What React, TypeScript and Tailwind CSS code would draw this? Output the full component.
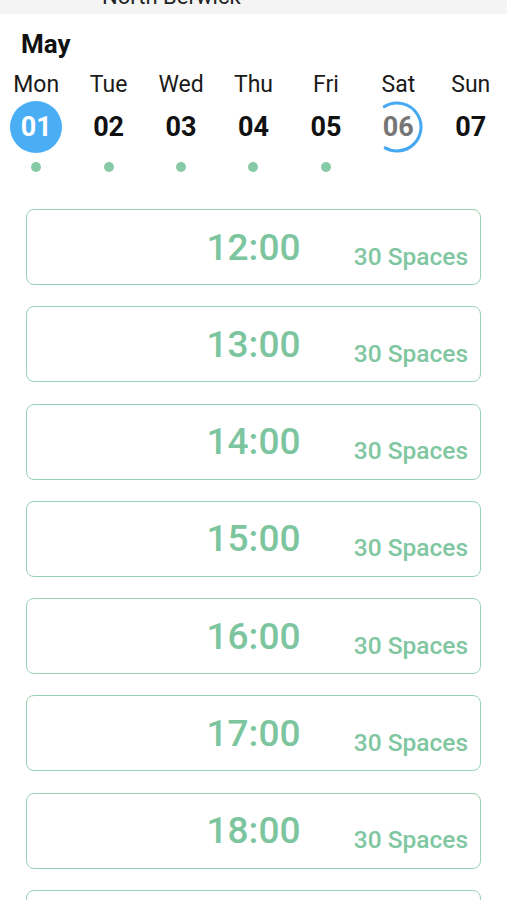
import React from "react";

const days = [
  { name: "Mon", num: "01", state: "selected", dot: true },
  { name: "Tue", num: "02", state: "normal", dot: true },
  { name: "Wed", num: "03", state: "normal", dot: true },
  { name: "Thu", num: "04", state: "normal", dot: true },
  { name: "Fri", num: "05", state: "normal", dot: true },
  { name: "Sat", num: "06", state: "loading", dot: false },
  { name: "Sun", num: "07", state: "normal", dot: false },
];

const times = ["12:00", "13:00", "14:00", "15:00", "16:00", "17:00", "18:00", "19:00"];

export default function App() {
  return (
    <div
      className="w-[507px] h-[900px] overflow-hidden bg-white"
      style={{ fontFamily: "Roboto, 'Noto Sans', sans-serif" }}
    >
      <div className="h-[14px] bg-[#f4f4f4] overflow-hidden">
        <div className="pl-[102px] mt-[-14.5px] text-[22px] leading-none text-[#222]">North Berwick</div>
      </div>

      <div className="pl-[21px] mt-[17px] text-[26px] leading-none font-bold text-[#111]">May</div>

      <div className="grid grid-cols-7 mt-[16px]">
        {days.map((d) => (
          <div key={d.name} className="flex flex-col items-center">
            <div className="h-[23px] text-[23px] leading-none text-[#1a1a1a]">{d.name}</div>
            <div className="relative mt-[5px] w-[52px] h-[52px] flex items-center justify-center">
              {d.state === "selected" && (
                <div className="absolute inset-0 rounded-full bg-[#4aaef5]" />
              )}
              {d.state === "loading" && (
                <svg className="absolute left-[-3px] top-[-2px]" width="56" height="56" viewBox="0 0 56 56">
                  <circle
                    cx="28"
                    cy="28"
                    r="24"
                    fill="none"
                    stroke="#45a8f3"
                    strokeWidth="3"
                    strokeLinecap="round"
                    strokeDasharray="100.5 150.8"
                    transform="rotate(-122 28 28)"
                  />
                </svg>
              )}
              <span
                className={
                  "relative text-[27px] leading-none font-bold " +
                  (d.state === "selected"
                    ? "text-white"
                    : d.state === "loading"
                    ? "text-[#767676]"
                    : "text-[#111]")
                }
              >
                {d.num}
              </span>
            </div>
            <div
              className={
                "mt-[9px] w-[10px] h-[10px] rounded-full " + (d.dot ? "bg-[#86cba5]" : "bg-transparent")
              }
            />
          </div>
        ))}
      </div>

      <div className="flex flex-col gap-[21.3px] px-[26px] mt-[37px]">
        {times.map((t) => (
          <div
            key={t}
            className="h-[76px] shrink-0 border-[1.5px] border-[#98d3b4] rounded-[8px] grid grid-cols-[1fr_auto_1fr]"
          >
            <div />
            <div className="flex items-center text-[37px] leading-none font-medium text-[#7cc59e]">{t}</div>
            <div className="flex items-end justify-end pr-[12px] pb-[15px]">
              <span className="text-[24.5px] leading-none font-medium text-[#80c7a1]">30 Spaces</span>
            </div>
          </div>
        ))}
      </div>
    </div>
  );
}
